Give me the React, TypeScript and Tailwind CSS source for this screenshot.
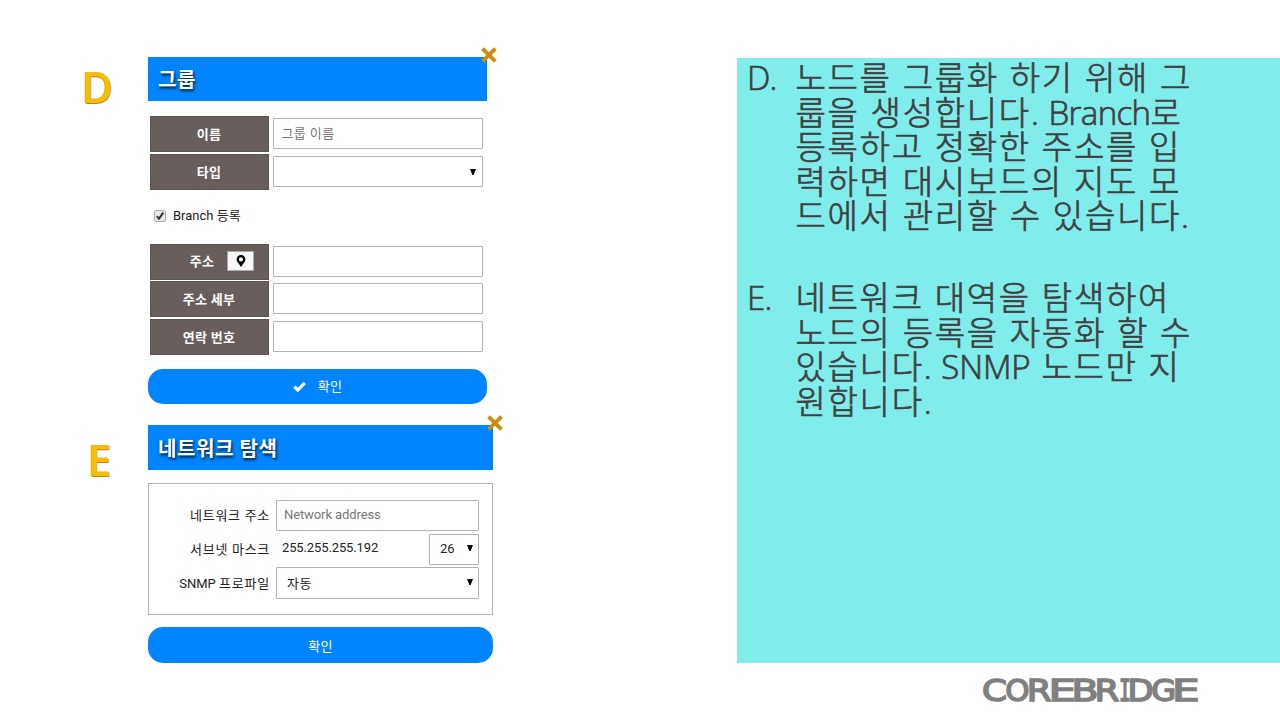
import type { ReactNode } from "react";

function CloseMark() {
  return (
    <svg className="absolute -top-[11px] -right-[11px]" width="18" height="18" viewBox="0 0 18 18">
      <path d="M2.6 2.6 15.4 15.4M15.4 2.6 2.6 15.4" stroke="#c98f14" strokeWidth="4" />
    </svg>
  );
}

function Letter({ children, className }: { children: ReactNode; className: string }) {
  return (
    <div
      className={`w-[66px] shrink-0 font-['Open_Sans'] text-[43px] leading-[44px] font-semibold text-[#f7bd06] [text-shadow:0.5px_0.5px_0_#b98512,-0.5px_-0.5px_0_#dba510] ${className}`}
    >
      <span className="-ml-[1.5px]">{children}</span>
    </div>
  );
}

function Title({ children, className }: { children: ReactNode; className: string }) {
  return (
    <div
      className={`relative flex items-center bg-[#0084ff] pt-[2px] pl-[10px] text-[20px] leading-none font-bold tracking-[0.6px] text-white [text-shadow:1px_2px_3px_rgba(0,0,0,0.85)] ${className}`}
    >
      {children}
      <CloseMark />
    </div>
  );
}

function Arrow({ className }: { className: string }) {
  return (
    <svg className={className} width="6" height="6" viewBox="0 0 6 6">
      <path d="M0 0H6L3.6 6H2.4Z" fill="#000" />
    </svg>
  );
}

function Row({ label, icon, children }: { label: string; icon?: ReactNode; children?: ReactNode }) {
  return (
    <div className="flex h-[36px] items-center gap-[4px]">
      <div className="flex h-[36px] w-[119px] items-center justify-center border border-[#5b5452] bg-[#685f5d] pt-[1px] text-[13px] font-bold tracking-[0.3px] text-white">
        <span className={icon ? "mr-[13px] ml-[26px]" : ""}>{label}</span>
        {icon}
      </div>
      <div className="-mt-[1px] flex h-[31px] w-[210px] items-center rounded-[1px] border border-[#b2b2b2] px-[8px] text-[13px] tracking-[0.4px] text-[#777]">
        {children}
      </div>
    </div>
  );
}

function Pin() {
  return (
    <span className="-mt-[2px] flex h-[20px] w-[27px] shrink-0 items-center justify-center border border-[#aaa] bg-[#f8f8f8]">
      <svg width="10" height="12" viewBox="0 0 10 12">
        <path
          fillRule="evenodd"
          d="M5 0a4.4 4.4 0 0 1 4.4 4.4C9.4 7 6.6 8.6 5 12 3.4 8.6.6 7 .6 4.4A4.4 4.4 0 0 1 5 0Zm0 2.3a2.1 2.1 0 1 0 0 4.2 2.1 2.1 0 0 0 0-4.2Z"
          fill="#000"
        />
      </svg>
    </span>
  );
}

function Line({ children }: { children: ReactNode }) {
  return <div className="whitespace-nowrap">{children}</div>;
}

function Item({ mark, children, className }: { mark: string; children: ReactNode; className: string }) {
  return (
    <div className={`flex ${className}`}>
      <div className="w-[48.5px] shrink-0 tracking-[-0.8px]">{mark}</div>
      <div>{children}</div>
    </div>
  );
}

function Wordmark() {
  return (
    <svg className="mt-[10px] ml-[241px]" width="226" height="36" viewBox="-3 -3 226 36">
      <text
        y="24.6"
        fontFamily="DejaVu Sans"
        fontSize="29.5"
        fill="#808080"
        stroke="#808080"
        strokeWidth="1.5"
      >
        <tspan x="1" textLength="25" lengthAdjust="spacingAndGlyphs">C</tspan>
        <tspan x="24.2" textLength="24.4" lengthAdjust="spacingAndGlyphs">O</tspan>
        <tspan x="45.7" textLength="24.8" lengthAdjust="spacingAndGlyphs">R</tspan>
        <tspan x="67.6" textLength="27.6" lengthAdjust="spacingAndGlyphs">E</tspan>
        <tspan x="90.4" textLength="27" lengthAdjust="spacingAndGlyphs">B</tspan>
        <tspan x="113.6" textLength="24.8" lengthAdjust="spacingAndGlyphs">R</tspan>
        <tspan x="138.1" textLength="11.9" lengthAdjust="spacingAndGlyphs" fontFamily="DejaVu Sans Mono">I</tspan>
        <tspan x="146.5" textLength="26" lengthAdjust="spacingAndGlyphs">D</tspan>
        <tspan x="170.2" textLength="25" lengthAdjust="spacingAndGlyphs">G</tspan>
        <tspan x="191" textLength="27.6" lengthAdjust="spacingAndGlyphs">E</tspan>
      </text>
    </svg>
  );
}

export default function App() {
  return (
    <div className="flex h-[720px] w-[1280px] overflow-hidden bg-white font-['Roboto','Noto_Sans_CJK_KR',sans-serif] text-[13px] text-[#222]">
      <div className="w-[737px] shrink-0 pt-[57px] pl-[82px]">
        <div className="flex h-[368px]">
          <Letter className="pt-[8px] pl-[1px]">D</Letter>
          <div className="w-[339px]">
            <Title className="h-[44px]">그룹</Title>
            <div className="mt-[15px] ml-[1.5px] flex flex-col gap-[2px]">
              <Row label="이름">그룹 이름</Row>
              <Row label="타입">
                <Arrow className="-mr-[2px] ml-auto" />
              </Row>
            </div>
            <div className="mt-[15px] ml-[6px] flex h-[22px] items-center gap-[7px]">
              <svg width="12" height="12" viewBox="0 0 12 12">
                <rect x=".5" y=".5" width="11" height="11" rx="1.5" fill="#e9e9e9" stroke="#b0b0b0" />
                <path d="M2.8 6.2 5 8.6 9.3 2.6" fill="none" stroke="#333" strokeWidth="2" />
              </svg>
              <span>Branch 등록</span>
            </div>
            <div className="mt-[16.6px] ml-[1.5px] flex flex-col gap-[1.7px]">
              <Row label="주소" icon={<Pin />} />
              <Row label="주소 세부" />
              <Row label="연락 번호" />
            </div>
            <div className="mt-[14px] flex h-[35px] items-center justify-center gap-[12px] rounded-[15px] bg-[#0084ff] pt-[1px] tracking-[0.3px] text-white">
              <svg width="13" height="11" viewBox="0 0 13 11">
                <path d="M1.3 5.6 4.8 9 11.7 1.9" fill="none" stroke="#fff" strokeWidth="3.2" />
              </svg>
              <span>확인</span>
            </div>
          </div>
        </div>
        <div className="flex">
          <Letter className="pt-[13px] pl-[7px]">E</Letter>
          <div className="w-[345px]">
            <Title className="h-[45px]">네트워크 탐색</Title>
            <div className="mt-[13px] flex h-[132px] flex-col gap-[2.5px] border border-[#b2b2b2] pt-[16px] pr-[13px]">
              <div className="flex h-[31px] items-center">
                <span className="w-[121px] pt-[1px] text-right tracking-[0.7px]">네트워크 주소</span>
                <div className="ml-[6px] flex h-[31px] flex-1 items-center rounded-[1px] border border-[#b2b2b2] pb-[1px] pl-[7px] tracking-[-0.1px] text-[#777]">
                  Network address
                </div>
              </div>
              <div className="flex h-[31px] items-center">
                <span className="w-[121px] pt-[2px] text-right tracking-[0.7px]">서브넷 마스크</span>
                <span className="-mt-[3px] ml-[12px] tracking-[-0.12px]">255.255.255.192</span>
                <div className="ml-auto flex h-[31px] w-[50px] items-center rounded-[1px] border border-[#b2b2b2] pl-[10px]">
                  26
                  <Arrow className="-mt-[2px] mr-[5px] ml-auto" />
                </div>
              </div>
              <div className="flex h-[32px] items-center">
                <span className="w-[121px] pt-[2px] text-right">
                  SNMP <span className="tracking-[0.8px]">프로파일</span>
                </span>
                <div className="ml-[6px] flex h-[32px] flex-1 items-center rounded-[1px] border border-[#b2b2b2] pt-[2px] pl-[10px] tracking-[0.5px]">
                  자동
                  <Arrow className="-mt-[5px] mr-[5px] ml-auto" />
                </div>
              </div>
            </div>
            <div className="mt-[12px] flex h-[36px] items-center justify-center rounded-[15px] bg-[#0084ff] pt-[3px] tracking-[0.3px] text-white">
              확인
            </div>
          </div>
        </div>
      </div>
      <div className="flex flex-1 flex-col pt-[58px]">
        <div className="h-[605px] bg-[#81edeb] pt-[3px] pl-[10px] font-['Open_Sans','Noto_Sans_CJK_KR',sans-serif] text-[33px] leading-[34.5px] font-light tracking-[1.7px] text-[#404040] [word-spacing:0.7px] [-webkit-text-stroke:0.7px_#404040]">
          <Item mark="D." className="h-[220px]">
            <Line>노드를 그룹화 하기 위해 그</Line>
            <Line>
              룹을 생성합니다. <span className="-ml-[3px] tracking-[-0.6px]">Branch</span>로
            </Line>
            <Line>등록하고 정확한 주소를 입</Line>
            <Line>력하면 대시보드의 지도 모</Line>
            <Line>드에서 관리할 수 있습니다.</Line>
          </Item>
          <Item mark="E." className="h-[140px]">
            <Line>네트워크 대역을 탐색하여</Line>
            <Line>노드의 등록을 자동화 할 수</Line>
            <Line>
              있습니다. <span className="-ml-[3px] tracking-[-0.1px]">SNMP</span> 노드만 지
            </Line>
            <Line>원합니다.</Line>
          </Item>
        </div>
        <Wordmark />
      </div>
    </div>
  );
}
